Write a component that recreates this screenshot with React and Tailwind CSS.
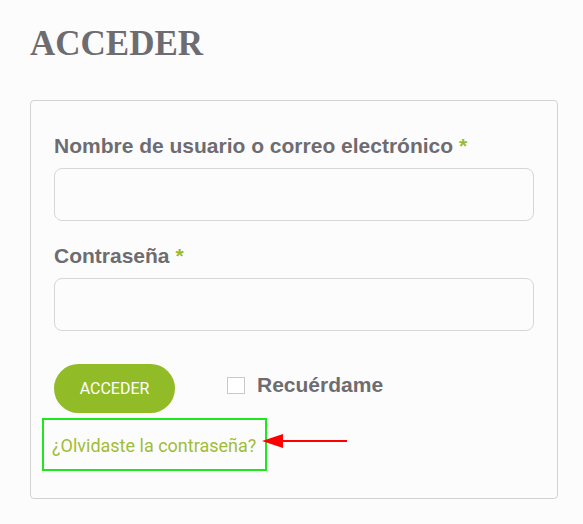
export default function App() {
  return (
    <div className="min-h-screen bg-[#fdfcfd] px-[30px] pt-[26px] pb-[26px]">
      <h1 className="font-['Liberation_Serif',serif] text-[35px] leading-[35px] font-bold text-[#6d6c71]">
        ACCEDER
      </h1>

      <div className="relative mt-[39px] w-[528px] rounded-[4px] border border-[#d2d2d4] px-[23px] pt-[33px] pb-[27px] font-['Liberation_Sans',Arial,sans-serif]">
        <label className="block text-[21px] leading-[24px] font-bold text-[#6d6c71]">
          Nombre de usuario o correo electrónico <span className="text-[#95bd2a]">*</span>
        </label>
        <input
          type="text"
          className="mt-[10px] block h-[53px] w-full rounded-[8px] border border-[#d6d6d8] bg-[#fdfcfd] outline-none"
        />

        <label className="mt-[23px] block text-[21px] leading-[24px] font-bold text-[#6d6c71]">
          Contraseña <span className="text-[#95bd2a]">*</span>
        </label>
        <input
          type="password"
          className="mt-[10px] block h-[53px] w-full rounded-[8px] border border-[#d6d6d8] bg-[#fdfcfd] outline-none"
        />

        <div className="mt-[33px] flex items-start">
          <button className="h-[49px] w-[121px] rounded-full bg-[#92bb28] font-['Roboto',sans-serif] text-[16px] text-white">
            ACCEDER
          </button>
          <label className="mt-[9px] ml-[52px] flex items-center gap-[12px] text-[21px] leading-[24px] font-bold text-[#6d6c71]">
            <span className="block h-[17px] w-[18px] border border-[#c9c9cb] bg-white" />
            Recuérdame
          </label>
        </div>

        <div className="mt-[5px] ml-[-12px] h-[53px] w-[225px] border-2 border-[#1fe61f] pl-[8px] pt-[12px]">
          <a className="font-['Roboto',sans-serif] text-[18px] leading-[27px] text-[#a0bd35]">
            ¿Olvidaste la contraseña?
          </a>
        </div>

        <svg
          className="absolute left-[231px] top-[332px]"
          width="86"
          height="16"
          viewBox="0 0 86 16"
        >
          <line x1="18" y1="8" x2="85" y2="8" stroke="#ff0000" strokeWidth="2" />
          <polygon points="0,8 21,1 21,15" fill="#ff0000" />
        </svg>
      </div>
    </div>
  );
}
